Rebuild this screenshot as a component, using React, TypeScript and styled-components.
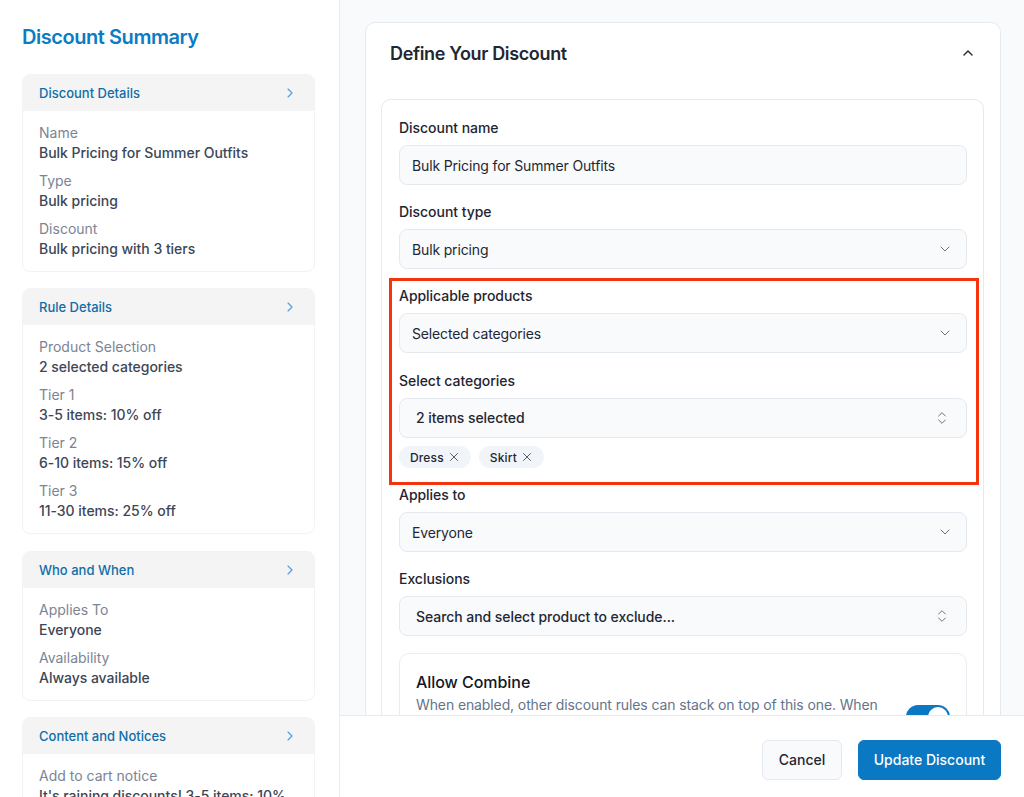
import React from "react";
import styled, { createGlobalStyle } from "styled-components";
import { ChevronDown, ChevronRight, ChevronUp, ChevronsUpDown, X } from "lucide-react";

const Global = createGlobalStyle`
  html, body { margin: 0; padding: 0; height: 100%; background: #fff; }
  body { font-family: Inter, "Liberation Sans", sans-serif; -webkit-font-smoothing: antialiased; }
  * { box-sizing: border-box; }
`;

const Page = styled.div`
  display: flex;
  width: 1024px;
  height: 797px;
  overflow: hidden;
`;
const Sidebar = styled.aside`
  width: 340px;
  flex: none;
  height: 100%;
  overflow: hidden;
  padding: 24px 24px 0 22px;
  border-right: 1px solid #e8ecf1;
  background: #fff;
`;
const SummaryTitle = styled.h2`
  margin: 0 0 24px;
  font-size: 20px;
  line-height: 26px;
  font-weight: 600;
  letter-spacing: -0.45px;
  color: #0a7cc4;
`;
const SummaryCard = styled.section`
  border: 1px solid #f1f3f5;
  border-radius: 8px;
  overflow: hidden;
  margin-bottom: 16.4px;
  background: #fff;
`;
const SummaryHeader = styled.div`
  display: flex;
  align-items: center;
  justify-content: space-between;
  height: 36px;
  padding: 0 16px;
  background: #f4f4f5;
  color: #0f6ea8;
  font-size: 13px;
  font-weight: 500;
  svg { color: #4f9fe8; }
`;
const SummaryBody = styled.div`
  display: flex;
  flex-direction: column;
  gap: 8px;
  padding: 12px 16px;
`;
const SummaryItem = styled.div`
  font-size: 14px;
  line-height: 20px;
`;
const SummaryLabel = styled.div`
  color: #7b8494;
`;
const SummaryValue = styled.div`
  color: #3c4656;
  font-weight: 500;
  letter-spacing: -0.03px;
  white-space: nowrap;
`;

const Right = styled.div`
  flex: 1;
  min-width: 0;
  display: flex;
  flex-direction: column;
  height: 100%;
`;
const Scroll = styled.main`
  flex: 1;
  min-height: 0;
  overflow: hidden;
  background: #f8fafc;
  padding: 22px 23px 0 25px;
`;
const OuterCard = styled.section`
  background: #fff;
  border: 1px solid #e5eaf1;
  border-radius: 10px;
  padding: 0 16px 16px 15px;
`;
const OuterHeader = styled.div`
  display: flex;
  align-items: center;
  justify-content: space-between;
  height: 60px;
  padding: 0 9px;
  margin-bottom: 16px;
  color: #1f2732;
  svg { margin-right: -1px; }
`;
const OuterTitle = styled.h3`
  margin: 0;
  font-size: 18px;
  font-weight: 600;
  letter-spacing: -0.35px;
  color: #1f2732;
`;
const InnerCard = styled.div`
  border: 1px solid #e5eaf1;
  border-radius: 10px;
  padding: 18px 16px 16px 17px;
  background: #fff;
`;
const Field = styled.div`
  margin-bottom: 17.2px;
`;
const Label = styled.div`
  font-size: 14px;
  line-height: 20px;
  font-weight: 500;
  letter-spacing: -0.04px;
  color: #1e2530;
  margin-bottom: 7px;
`;
const Control = styled.div`
  display: flex;
  align-items: center;
  justify-content: space-between;
  height: 40px;
  padding: 0 13px 0 12px;
  background: #f8fafc;
  border: 1px solid #e4e9f0;
  border-radius: 8px;
  font-size: 14px;
  letter-spacing: -0.15px;
  color: #1f2732;
  svg { color: #6b7280; flex: none; }
`;
const ComboControl = styled(Control)`
  padding: 0 16px 0 16px;
  font-weight: 500;
  letter-spacing: -0.06px;
`;
const Highlight = styled.div`
  position: relative;
  &::after {
    content: "";
    position: absolute;
    left: -10px;
    right: -12px;
    top: -8px;
    bottom: 0;
    border: 3px solid #f5330c;
    pointer-events: none;
  }
`;
const Tags = styled.div`
  display: flex;
  gap: 8px;
  margin-top: 8.5px;
`;
const Tag = styled.span`
  display: inline-flex;
  align-items: center;
  gap: 3px;
  height: 22px;
  padding: 0 10px 0 11px;
  border-radius: 11px;
  background: #f1f5f9;
  font-size: 12px;
  font-weight: 500;
  letter-spacing: 0.15px;
  color: #1f2732;
  svg { color: #3f4855; }
`;
const TagField = styled.div`
  padding-bottom: 17px;
`;
const CombineCard = styled.div`
  display: flex;
  align-items: flex-start;
  gap: 28px;
  border: 1px solid #e9edf3;
  border-radius: 10px;
  padding: 17px 16px 16px 16px;
`;
const CombineText = styled.div`
  flex: 1;
  min-width: 0;
`;
const CombineTitle = styled.div`
  font-size: 16px;
  line-height: 22px;
  font-weight: 500;
  letter-spacing: -0.05px;
  color: #111827;
  margin-bottom: 2px;
`;
const CombineDesc = styled.div`
  font-size: 14px;
  line-height: 20px;
  letter-spacing: -0.11px;
  color: #64748b;
`;
const Toggle = styled.div`
  flex: none;
  width: 44px;
  height: 24px;
  margin-top: 34px;
  border-radius: 12px;
  background: #0a78c2;
  padding: 2px;
  display: flex;
  justify-content: flex-end;
  &::before {
    content: "";
    width: 20px;
    height: 20px;
    border-radius: 50%;
    background: #fff;
  }
`;
const Footer = styled.footer`
  flex: none;
  height: 82px;
  display: flex;
  align-items: flex-start;
  justify-content: flex-end;
  gap: 16px;
  padding: 24px 23px 0 0;
  background: #fff;
  border-top: 1px solid #e6ebf1;
`;
const Button = styled.button<{ $primary?: boolean }>`
  width: ${(p) => (p.$primary ? 143 : 80)}px;
  height: 40px;
  padding: 0 0 2px;
  border-radius: 6px;
  font-family: inherit;
  font-size: 14px;
  font-weight: 500;
  color: ${(p) => (p.$primary ? "#fff" : "#1f2732")};
  background: ${(p) => (p.$primary ? "#0a78c2" : "#f8fafc")};
  border: 1px solid ${(p) => (p.$primary ? "#0a78c2" : "#e4e9f0")};
`;

const summary = [
  { title: "Discount Details", items: [["Name", "Bulk Pricing for Summer Outfits"], ["Type", "Bulk pricing"], ["Discount", "Bulk pricing with 3 tiers"]] },
  { title: "Rule Details", items: [["Product Selection", "2 selected categories"], ["Tier 1", "3-5 items: 10% off"], ["Tier 2", "6-10 items: 15% off"], ["Tier 3", "11-30 items: 25% off"]] },
  { title: "Who and When", items: [["Applies To", "Everyone"], ["Availability", "Always available"]] },
  { title: "Content and Notices", items: [["Add to cart notice", "It's raining discounts! 3-5 items: 10%"]] },
];

export default function App() {
  return (
    <Page>
      <Global />
      <Sidebar>
        <SummaryTitle>Discount Summary</SummaryTitle>
        {summary.map((card) => (
          <SummaryCard key={card.title}>
            <SummaryHeader>
              {card.title}
              <ChevronRight size={16} strokeWidth={1.75} />
            </SummaryHeader>
            <SummaryBody>
              {card.items.map(([label, value]) => (
                <SummaryItem key={label}>
                  <SummaryLabel>{label}</SummaryLabel>
                  <SummaryValue>{value}</SummaryValue>
                </SummaryItem>
              ))}
            </SummaryBody>
          </SummaryCard>
        ))}
      </Sidebar>
      <Right>
        <Scroll>
          <OuterCard>
            <OuterHeader>
              <OuterTitle>Define Your Discount</OuterTitle>
              <ChevronUp size={16} />
            </OuterHeader>
            <InnerCard>
              <Field>
                <Label>Discount name</Label>
                <Control>Bulk Pricing for Summer Outfits</Control>
              </Field>
              <Field>
                <Label>Discount type</Label>
                <Control>
                  Bulk pricing
                  <ChevronDown size={16} strokeWidth={1.5} />
                </Control>
              </Field>
              <Highlight>
                <Field>
                  <Label>Applicable products</Label>
                  <Control>
                    Selected categories
                    <ChevronDown size={16} strokeWidth={1.5} />
                  </Control>
                </Field>
                <TagField>
                  <Label>Select categories</Label>
                  <ComboControl>
                    2 items selected
                    <ChevronsUpDown size={16} strokeWidth={1.5} />
                  </ComboControl>
                  <Tags>
                    <Tag>Dress <X size={14} strokeWidth={1.5} /></Tag>
                    <Tag>Skirt <X size={14} strokeWidth={1.5} /></Tag>
                  </Tags>
                </TagField>
              </Highlight>
              <Field>
                <Label>Applies to</Label>
                <Control>
                  Everyone
                  <ChevronDown size={16} strokeWidth={1.5} />
                </Control>
              </Field>
              <Field>
                <Label>Exclusions</Label>
                <ComboControl>
                  Search and select product to exclude...
                  <ChevronsUpDown size={16} strokeWidth={1.5} />
                </ComboControl>
              </Field>
              <CombineCard>
                <CombineText>
                  <CombineTitle>Allow Combine</CombineTitle>
                  <CombineDesc>
                    When enabled, other discount rules can stack on top of this one. When disabled, only this discount applies.
                  </CombineDesc>
                </CombineText>
                <Toggle />
              </CombineCard>
            </InnerCard>
          </OuterCard>
        </Scroll>
        <Footer>
          <Button>Cancel</Button>
          <Button $primary>Update Discount</Button>
        </Footer>
      </Right>
    </Page>
  );
}
